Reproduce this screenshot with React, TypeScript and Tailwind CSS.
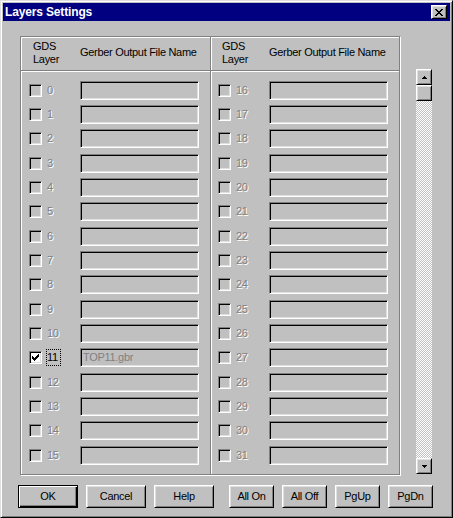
const rows = Array.from({ length: 16 }, (_, i) => i);

const raised =
  "border border-t-white border-l-white border-b-black border-r-black shadow-[inset_1px_1px_0_#dfdfdf,inset_-1px_-1px_0_#808080]";
const sunken =
  "border border-t-[#808080] border-l-[#808080] border-b-white border-r-white shadow-[inset_1px_1px_0_#000,inset_-1px_-1px_0_#dfdfdf]";

function CheckBox({ checked }: { checked?: boolean }) {
  return (
    <span className={`relative block w-[13px] h-[13px] shrink-0 ${sunken} ${checked ? "bg-white" : "bg-[#c0c0c0]"}`}>
      {checked && (
        <svg className="absolute left-[2px] top-[2px]" width="7" height="7" viewBox="0 0 7 7" shapeRendering="crispEdges">
          <path
            fill="#000"
            d="M6 0h1v1h-1z M5 1h2v1h-2z M0 2h1v1h-1z M4 2h3v1h-3z M0 3h2v1h-2z M3 3h3v1h-3z M0 4h5v1h-5z M1 5h3v1h-3z M2 6h1v1h-1z"
          />
        </svg>
      )}
    </span>
  );
}

function LayerRow({ n, right }: { n: number; right?: boolean }) {
  const on = n === 11;
  return (
    <div className={`flex items-center h-[24.33px] ${right ? "pl-[7px]" : "pl-[8px]"}`}>
      <CheckBox checked={on} />
      <div className="w-[34px] ml-[4px] shrink-0">
        <span
          className={`inline-block border border-dotted pr-[2px] leading-[15px] ${
            on ? "border-black text-black" : "border-transparent text-[#808080] [text-shadow:1px_1px_0_#fff]"
          }`}
        >
          {n}
        </span>
      </div>
      <div className={`w-[119px] h-[19px] px-[2px] leading-[17px] text-[#808080] bg-[#c0c0c0] ${sunken}`}>
        {on ? "TOP11.gbr" : ""}
      </div>
    </div>
  );
}

function Column({ start, right }: { start: number; right?: boolean }) {
  return (
    <div
      className={`flex flex-col ${
        right ? "flex-1 shadow-[inset_1px_0_0_#fff]" : "w-[190px] border-r border-[#808080]"
      }`}
    >
      <div className={`h-[34px] flex items-center pb-[2px] border-b border-[#808080] ${right ? "pl-[11px]" : "pl-[12px]"}`}>
        <div className="w-[47px] leading-[13px]">
          GDS
          <br />
          Layer
        </div>
        <div className="leading-[13px]">Gerber Output File Name</div>
      </div>
      <div className="flex-1 pt-[7px] shadow-[inset_0_1px_0_#fff]">
        {rows.map((i) => (
          <LayerRow key={i} n={start + i} right={right} />
        ))}
      </div>
    </div>
  );
}

function Arrow({ down }: { down?: boolean }) {
  return (
    <svg width="5" height="3" viewBox="0 0 5 3" shapeRendering="crispEdges" className={down ? "rotate-180" : ""}>
      <path fill="#000" d="M2 0h1v1h-1z M1 1h3v1h-3z M0 2h5v1h-5z" />
    </svg>
  );
}

function ScrollBar() {
  return (
    <div className="w-[16px] h-[405px] mt-[33px] flex flex-col bg-[repeating-conic-gradient(#fff_0_25%,#c0c0c0_0_50%)] bg-[length:2px_2px]">
      <div className={`h-[16px] flex items-center justify-center bg-[#c0c0c0] ${raised}`}>
        <Arrow />
      </div>
      <div className={`h-[16px] bg-[#c0c0c0] ${raised}`} />
      <div className="flex-1" />
      <div className={`h-[16px] flex items-center justify-center bg-[#c0c0c0] ${raised}`}>
        <Arrow down />
      </div>
    </div>
  );
}

function Button({ label, wide, def }: { label: string; wide?: boolean; def?: boolean }) {
  return (
    <button
      className={`h-[23px] ${wide ? "w-[60px]" : "w-[45px]"} bg-[#c0c0c0] text-black leading-none ${
        def
          ? "border border-black shadow-[inset_1px_1px_0_#fff,inset_-1px_-1px_0_#000,inset_-2px_-2px_0_#808080]"
          : raised
      }`}
    >
      {label}
    </button>
  );
}

export default function App() {
  return (
    <div className="w-[453px] h-[518px] bg-[#c0c0c0] p-[2px] border border-t-[#dfdfdf] border-l-[#dfdfdf] border-b-black border-r-black shadow-[inset_1px_1px_0_#fff,inset_-1px_-1px_0_#808080] font-['Liberation_Sans',Arial,sans-serif] text-[11px] tracking-[-0.3px] text-black select-none">
      {/* Title bar */}
      <div className="h-[18px] bg-[#000080] flex items-center justify-between pl-[2px] pr-[3px]">
        <span className="text-white font-bold text-[12px] tracking-[-0.15px]">Layers Settings</span>
        <div className={`w-[16px] h-[14px] bg-[#c0c0c0] flex items-center justify-center ${raised}`}>
          <svg width="8" height="7" viewBox="0 0 8 7" shapeRendering="crispEdges">
            <path
              fill="#000"
              d="M0 0h2v1h-2z M6 0h2v1h-2z M1 1h2v1h-2z M5 1h2v1h-2z M2 2h4v1h-4z M3 3h2v1h-2z M2 4h4v1h-4z M1 5h2v1h-2z M5 5h2v1h-2z M0 6h2v1h-2z M6 6h2v1h-2z"
            />
          </svg>
        </div>
      </div>

      {/* Body */}
      <div className="flex pt-[15px] pl-[17px]">
        <div className="w-[380px] h-[439px] flex border border-[#808080] shadow-[1px_1px_0_#fff,inset_1px_1px_0_#fff]">
          <Column start={0} />
          <Column start={16} right />
        </div>
        <div className="ml-[16px]">
          <ScrollBar />
        </div>
      </div>

      {/* Buttons */}
      <div className="flex mt-[10px] pl-[15px]">
        <div className="flex gap-[8px]">
          <Button label="OK" wide def />
          <Button label="Cancel" wide />
          <Button label="Help" wide />
        </div>
        <div className="flex gap-[8px] ml-[15px]">
          <Button label="All On" />
          <Button label="All Off" />
          <Button label="PgUp" />
          <Button label="PgDn" />
        </div>
      </div>
    </div>
  );
}
